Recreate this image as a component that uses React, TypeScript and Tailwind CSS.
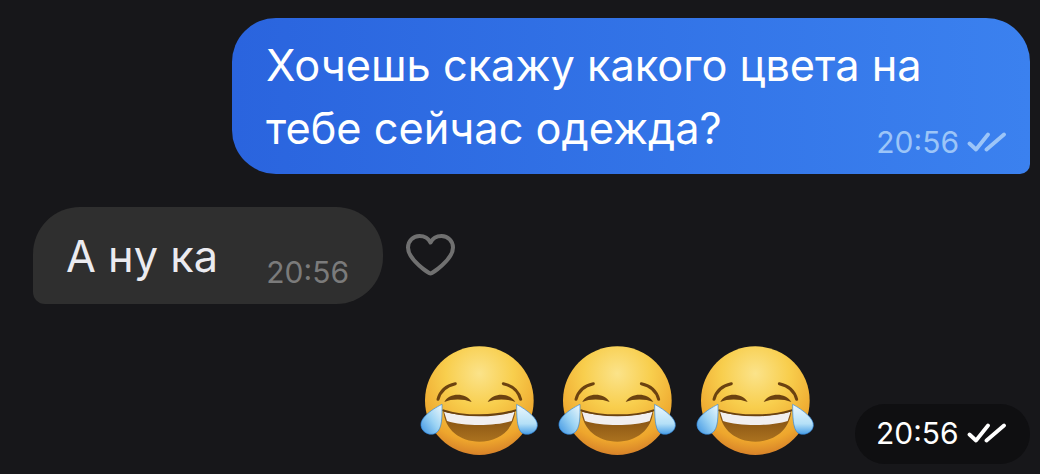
import React from "react";

function Checks({ color }: { color: string }) {
  return (
    <svg width="40" height="20" viewBox="0 0 40 20" fill="none" className="shrink-0">
      <path d="M2.5 11.5 L9 17.5 L21 2.5" stroke={color} strokeWidth="3.8" strokeLinecap="round" strokeLinejoin="round" />
      <path d="M19.5 17.5 L37 2.5" stroke={color} strokeWidth="3.8" strokeLinecap="round" />
    </svg>
  );
}

function Heart() {
  return (
    <svg width="50" height="42" viewBox="0 0 50 42" fill="none" className="shrink-0">
      <path
        d="M24.5 39.5 C23.5 39.5 2 26 2 13.5 C2 7 7 2 13.5 2 C18.5 2 22.5 4.5 24.5 8.5 C26.5 4.5 30.5 2 35.5 2 C42 2 47 7 47 13.5 C47 26 25.5 39.5 24.5 39.5 Z"
        stroke="#707070"
        strokeWidth="4"
        strokeLinejoin="round"
      />
    </svg>
  );
}

function Emoji({ id }: { id: string }) {
  return (
    <svg width="120" height="112" viewBox="30 30 360 336" className="shrink-0">
      <defs>
        <radialGradient id={`f${id}`} cx="50%" cy="25%" r="78%">
          <stop offset="0" stopColor="#fbe38a" />
          <stop offset="0.4" stopColor="#f8ce4d" />
          <stop offset="0.8" stopColor="#eea62d" />
          <stop offset="1" stopColor="#d27a28" />
        </radialGradient>
        <linearGradient id={`m${id}`} x1="0" y1="0" x2="0" y2="1">
          <stop offset="0" stopColor="#7c4a10" />
          <stop offset="1" stopColor="#ab721f" />
        </linearGradient>
        <linearGradient id={`t${id}`} x1="0" y1="0" x2="0" y2="1">
          <stop offset="0" stopColor="#eef8fc" />
          <stop offset="0.65" stopColor="#b4e0f7" />
          <stop offset="1" stopColor="#4a9fe6" />
        </linearGradient>
        <linearGradient id={`l${id}`} x1="1" y1="0" x2="0" y2="1">
          <stop offset="0" stopColor="#eef8fc" />
          <stop offset="0.5" stopColor="#9bd3f4" />
          <stop offset="1" stopColor="#3d93e2" />
        </linearGradient>
      </defs>
      <circle cx="208" cy="197" r="163" fill={`url(#f${id})`} />
      <path d="M84 193 C90 170 108 152 136 146" stroke="#6b4210" strokeWidth="9" fill="none" strokeLinecap="round" />
      <path d="M332 193 C326 170 308 152 280 146" stroke="#6b4210" strokeWidth="9" fill="none" strokeLinecap="round" />
      <path d="M103 201 C118 172 168 172 185 201 C160 191 125 191 103 201 Z" fill="#6b4210" />
      <path d="M233 201 C250 172 298 172 316 201 C292 191 256 191 233 201 Z" fill="#6b4210" />
      <path d="M100 226 C160 246 256 246 316 226 C312 285 265 320 208 320 C150 320 104 285 100 226 Z" fill={`url(#m${id})`} />
      <path d="M102 230 C160 246 256 246 314 230 L305 258 C256 274 160 274 111 258 Z" fill="#f1eff0" />
      <path d="M100 226 C160 246 256 246 316 226" stroke="#6b4210" strokeWidth="6" fill="none" strokeLinecap="round" />
      <path d="M96 208 C60 226 30 250 33 272 C36 294 62 304 78 294 C98 282 96 240 96 208 Z" fill={`url(#l${id})`} stroke="#2f86dc" strokeWidth="2" />
      <path d="M320 208 C352 226 384 250 382 272 C380 294 352 304 336 294 C320 282 320 240 320 208 Z" fill={`url(#t${id})`} stroke="#2f86dc" strokeWidth="2" />
    </svg>
  );
}

export default function App() {
  return (
    <div className="w-[1040px] h-[474px] overflow-hidden bg-[#17171a] font-['Inter',sans-serif] flex flex-col pt-[18px] pr-[10px] pl-[33px]">
      <div className="self-end w-[798px] h-[156px] rounded-[44px] rounded-br-[10px] bg-gradient-to-r from-[#2a64de] to-[#3b81ef] pl-[34px] pr-[23px] pt-[16px] text-white text-[43.3px] leading-[63px]">
        <div className="whitespace-nowrap">Хочешь скажу какого цвета на</div>
        <div className="flex items-center justify-between">
          <span className="whitespace-nowrap">тебе сейчас одежда?</span>
          <span className="flex items-center gap-[8px] mt-[26px] text-[30px] leading-[32px] text-[#9cc5f8]">
            20:56
            <Checks color="#9cc5f8" />
          </span>
        </div>
      </div>

      <div className="flex items-center mt-[33px] gap-[23px]">
        <div className="w-[350px] h-[97px] rounded-[47px] rounded-bl-[12px] bg-[#2f2f2f] pl-[33px] pr-[34px] flex justify-between text-[43.3px] text-[#ebebf0]">
          <span className="leading-[47px] mt-[26px]">А ну ка</span>
          <span className="text-[30px] leading-[32px] mt-[49px] text-[#7b7b7b]">20:56</span>
        </div>
        <div className="mb-[1px]">
          <Heart />
        </div>
      </div>

      <div className="flex items-start justify-end mt-[41px]">
        <div className="flex gap-[18px]">
          <Emoji id="a" />
          <Emoji id="b" />
          <Emoji id="c" />
        </div>
        <div className="ml-[39px] mt-[59px] w-[175px] h-[60px] rounded-[30px] bg-[#0f0f11] pl-[21px] pb-[2px] flex items-center gap-[8px] text-[30px] text-white">
          20:56
          <Checks color="#ffffff" />
        </div>
      </div>
    </div>
  );
}
